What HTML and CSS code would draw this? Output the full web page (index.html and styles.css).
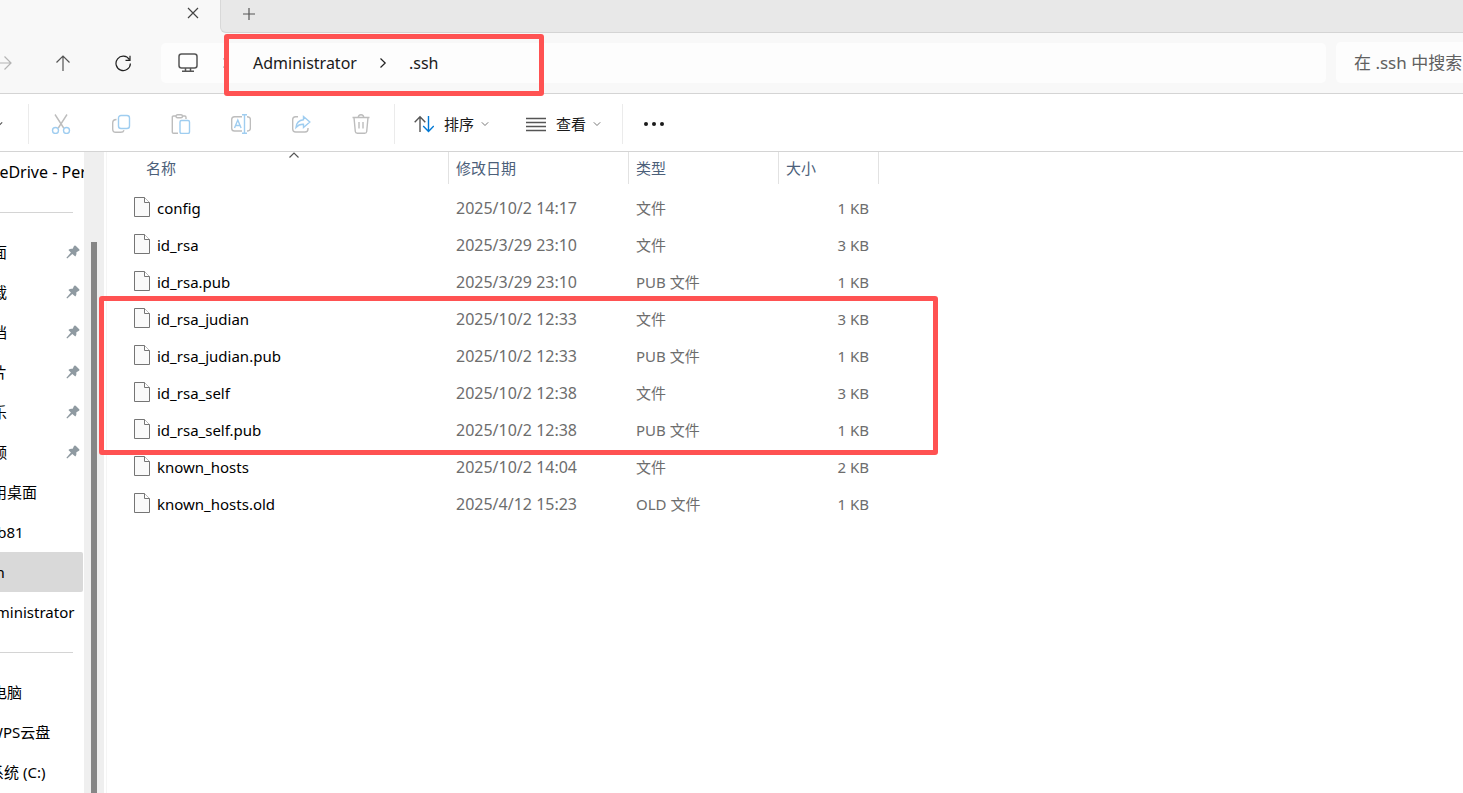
FILE: index.html
```html
<!DOCTYPE html>
<html lang="zh-CN">
<head>
  <meta charset="UTF-8" />
  <title>.ssh</title>
  <link rel="stylesheet" href="styles.css">
</head>
<body>
  <!-- shared icons -->
  <svg class="defs" width="0" height="0">
    <symbol id="file" viewBox="0 0 16 20">
      <path d="M.5.5h10l5 5v14H.5z" fill="#fafafa" stroke="#757575"/>
      <path d="M10.5.5v5h5" fill="#fff" stroke="#757575"/>
    </symbol>
    <symbol id="pin" viewBox="0 0 14 14">
      <path d="M8 .9Q8.800 0 9.700.8L13.200 4.200Q14 5.100 13 5.700L10.400 7.200Q10.800 9.900 9.300 11.400L6.300 9 1.200 13.600.4 12.800 4.900 7.600 2.400 5Q4 3.400 6.700 3.800z" fill="#8f9aa1"/>
    </symbol>
    <symbol id="down" viewBox="0 0 8 8">
      <path d="M.8 2.300 4 5.500 7.200 2.300" fill="none"/>
    </symbol>
  </svg>

  <div class="tabs">
    <div class="tab">
      <button aria-label="关闭"><svg width="12" height="12" viewBox="0 0 12 12"><path d="M1 1l10 10M11 1 1 11"/></svg></button>
    </div>
    <div class="tab-rest">
      <button aria-label="新建标签页"><svg width="12" height="12" viewBox="0 0 12 12"><path d="M6 0v12M0 6h12"/></svg></button>
    </div>
  </div>

  <div class="nav">
    <button class="dim" aria-label="前进"><svg width="18" height="18" viewBox="0 0 18 18"><path d="M1 9h16M10.500 2.500 17 9l-6.500 6.500"/></svg></button>
    <button aria-label="上移"><svg width="18" height="18" viewBox="0 0 18 18"><path d="M9 17V2M2.500 8.500 9 2l6.500 6.500"/></svg></button>
    <button class="dark" aria-label="刷新"><svg width="18" height="18" viewBox="0 0 18 18"><path d="M15.300 5.500A7.200 7.200 0 1 0 16.400 9.500M16 1.800v4.500h-4.500"/></svg></button>
    <div class="address">
      <svg class="pc" width="20" height="20" viewBox="0 0 20 20"><rect x="1" y="1" width="18" height="14" rx="2.500"/><path d="M7.500 15v3M12.500 15v3M4 18.300h12"/></svg>
      <svg class="crumb first" width="8" height="12" viewBox="0 0 8 12"><path d="M1.500 1.500 6.200 6l-4.700 4.500"/></svg>
      <a href="#">Administrator</a>
      <svg class="crumb" width="8" height="12" viewBox="0 0 8 12"><path d="M1.500 1.500 6.200 6l-4.700 4.500"/></svg>
      <a href="#">.ssh</a>
    </div>
    <input class="search" type="text" placeholder="在 .ssh 中搜索" aria-label="搜索">
    <div class="mark mark-path"></div>
  </div>

  <div class="toolbar">
    <button class="new" aria-label="新建"><svg width="8" height="8"><use href="#down"/></svg></button>
    <span class="sep"></span>
    <button class="icon" aria-label="剪切"><svg width="20" height="20" viewBox="0 0 20 20"><path d="M4 .5 12.700 14M16 .5 7.300 14"/><g class="blue"><circle cx="4.500" cy="16.500" r="3"/><circle cx="15.500" cy="16.500" r="3"/></g></svg></button>
    <button class="icon" aria-label="复制"><svg width="20" height="20" viewBox="0 0 20 20"><path d="M5.500 5.500Q1.700 5.500 1.700 9v6q0 3.300 3 3.300h5q2.700 0 3.300-2"/><rect class="blue" x="7.500" y="1.500" width="11" height="13" rx="2.500"/></svg></button>
    <button class="icon" aria-label="粘贴"><svg width="20" height="20" viewBox="0 0 20 20"><path d="M5 2H2.500Q1.300 2 1.300 3.200v15q0 1.100 1.200 1.100H7M11.500 2h2.300q1.200 0 1.200 1.200V5"/><rect x="5" y=".7" width="6.500" height="3" rx="1.500"/><rect class="blue" x="9" y="6.500" width="9.500" height="13" rx="1.500"/></svg></button>
    <button class="icon" aria-label="重命名"><svg width="20" height="20" viewBox="0 0 20 20"><path d="M11 2.700H3.500Q.7 2.700.7 5.500v8.700q0 2.800 2.800 2.800H11M16 2.700q3.400 0 3.400 3v8.300q0 3-3.400 3"/><path class="blue" d="M13.500.7v18.600M11 .7h5M11 19.300h5M3.500 14 6.800 6l3.300 8M4.600 11.500H9"/></svg></button>
    <button class="icon" aria-label="共享"><svg width="20" height="20" viewBox="0 0 20 20"><path d="M7 2.700H4.500Q1.700 2.700 1.700 5.500V15q0 3 3 3H14q3 0 3-3v-1"/><path class="blue" d="M12.500 2.500 18.800 8l-6.300 5.500v-3.200Q8 10 5 13.500 5.500 6.500 12.500 5.700z"/></svg></button>
    <button class="icon" aria-label="删除"><svg width="20" height="20" viewBox="0 0 20 20"><path d="M1.500 3.500h17M7.300 3.500Q7.300.7 10 .7t2.700 2.800M3 3.500l1.300 14q.2 1.800 2 1.800h7.400q1.800 0 2-1.800L17 3.500M8 8v6.500M12 8v6.500"/></svg></button>
    <span class="sep"></span>
    <button class="menu"><svg width="20" height="20" viewBox="0 0 20 20"><path d="M6 18V3M.7 8.200 6 2.700l5.300 5.500"/><path class="accent" d="M14.500 2v15M9.200 12l5.300 5.500 5.300-5.500"/></svg><span>排序</span><svg class="chev" width="8" height="8"><use href="#down"/></svg></button>
    <button class="menu"><svg width="20" height="20" viewBox="0 0 20 20"><path d="M0 4.500h20M0 8.500h20M0 12.500h20M0 16.500h20"/></svg><span>查看</span><svg class="chev" width="8" height="8"><use href="#down"/></svg></button>
    <span class="sep"></span>
    <button class="more" aria-label="更多"><svg width="22" height="6" viewBox="0 0 22 6"><circle cx="3" cy="3" r="2"/><circle cx="11" cy="3" r="2"/><circle cx="19" cy="3" r="2"/></svg></button>
  </div>

  <div class="content">
    <div class="sidebar">
      <ul>
        <li class="cloud"><a href="#">OneDrive - Per</a></li>
        <li class="line"></li>
        <li><a href="#">桌面</a><svg width="14" height="14"><use href="#pin"/></svg></li>
        <li><a href="#">下载</a><svg width="14" height="14"><use href="#pin"/></svg></li>
        <li><a href="#">文档</a><svg width="14" height="14"><use href="#pin"/></svg></li>
        <li><a href="#">图片</a><svg width="14" height="14"><use href="#pin"/></svg></li>
        <li><a href="#">音乐</a><svg width="14" height="14"><use href="#pin"/></svg></li>
        <li><a href="#">视频</a><svg width="14" height="14"><use href="#pin"/></svg></li>
        <li><a href="#">应用桌面</a></li>
        <li><a href="#">web81</a></li>
        <li class="active"><a href="#">.ssh</a></li>
        <li><a href="#">Administrator</a></li>
        <li class="line"></li>
        <li><a href="#">此电脑</a></li>
        <li class="sub"><a href="#">WPS云盘</a></li>
        <li class="sub"><a href="#">系统 (C:)</a></li>
      </ul>
    </div>
    <div class="scrollbar"><div class="thumb"></div></div>

    <div class="files">
      <table>
        <colgroup><col class="c-name"><col class="c-date"><col class="c-type"><col class="c-size"></colgroup>
        <thead>
          <tr>
            <th class="name"><div>名称<svg class="sort" width="10" height="6" viewBox="0 0 10 6"><path d="M.5 5.500 5 1l4.500 4.500"/></svg></div></th>
            <th>修改日期</th>
            <th>类型</th>
            <th>大小</th>
          </tr>
        </thead>
        <tbody>
          <tr><td class="name"><svg width="16" height="20"><use href="#file"/></svg>config</td><td class="date">2025/10/2 14:17</td><td>文件</td><td class="size">1 KB</td></tr>
          <tr><td class="name"><svg width="16" height="20"><use href="#file"/></svg>id_rsa</td><td class="date">2025/3/29 23:10</td><td>文件</td><td class="size">3 KB</td></tr>
          <tr><td class="name"><svg width="16" height="20"><use href="#file"/></svg>id_rsa.pub</td><td class="date">2025/3/29 23:10</td><td>PUB 文件</td><td class="size">1 KB</td></tr>
          <tr><td class="name"><svg width="16" height="20"><use href="#file"/></svg>id_rsa_judian</td><td class="date">2025/10/2 12:33</td><td>文件</td><td class="size">3 KB</td></tr>
          <tr><td class="name"><svg width="16" height="20"><use href="#file"/></svg>id_rsa_judian.pub</td><td class="date">2025/10/2 12:33</td><td>PUB 文件</td><td class="size">1 KB</td></tr>
          <tr><td class="name"><svg width="16" height="20"><use href="#file"/></svg>id_rsa_self</td><td class="date">2025/10/2 12:38</td><td>文件</td><td class="size">3 KB</td></tr>
          <tr><td class="name"><svg width="16" height="20"><use href="#file"/></svg>id_rsa_self.pub</td><td class="date">2025/10/2 12:38</td><td>PUB 文件</td><td class="size">1 KB</td></tr>
          <tr><td class="name"><svg width="16" height="20"><use href="#file"/></svg>known_hosts</td><td class="date">2025/10/2 14:04</td><td>文件</td><td class="size">2 KB</td></tr>
          <tr><td class="name"><svg width="16" height="20"><use href="#file"/></svg>known_hosts.old</td><td class="date">2025/4/12 15:23</td><td>OLD 文件</td><td class="size">1 KB</td></tr>
        </tbody>
      </table>
    </div>
    <div class="mark mark-keys"></div>
  </div>
</body>
</html>
```

FILE: styles.css
```css
* {
  box-sizing: border-box;
}
body {
  margin: 0;
  height: 100vh;
  display: flex;
  flex-direction: column;
  overflow: hidden;
  background: #fff;
  color: #000;
  font-family: "Noto Sans", "Noto Sans CJK SC", sans-serif;
  font-size: 15px;
  line-height: 20px;
}
button {
  display: flex;
  align-items: center;
  justify-content: center;
  flex: none;
  margin: 0;
  padding: 0;
  border: none;
  background: none;
  font: inherit;
  color: #1a1a1a;
}
a {
  color: inherit;
  text-decoration: none;
}
svg {
  flex: none;
  fill: none;
  stroke: #555;
  stroke-width: 1.2;
}
.defs {
  position: absolute;
}

/* tabs */
.tabs {
  display: flex;
  flex: none;
  height: 33px;
  background: #f8f8f8;
}
.tab {
  display: flex;
  justify-content: flex-end;
  width: 220px;
  padding-right: 15px;
}
.tab button {
  width: 24px;
  height: 26px;
}
.tab-rest button {
  width: 24px;
  height: 28px;
}
.tab svg {
  stroke: #444;
}
.tab-rest {
  flex: 1;
  padding-left: 16px;
  background: #e8e8e8;
  border-left: 1px solid #d8d8d8;
  border-bottom: 1px solid #d4d4d4;
  border-bottom-left-radius: 6px;
}

/* address row */
.nav {
  position: relative;
  display: flex;
  align-items: center;
  flex: none;
  height: 61px;
  padding-bottom: 1px;
  background: #f8f8f8;
  border-bottom: 1px solid #d4d4d4;
}
.nav button {
  width: 60px;
  height: 40px;
}
.nav button:first-child {
  margin-left: -27px;
}
.nav .dim svg {
  stroke: #b4b4b4;
}
.nav .dark svg {
  stroke: #222;
}
.address {
  display: flex;
  align-items: center;
  flex: 1;
  height: 40px;
  margin: 0 10px 0 8px;
  padding-left: 17px;
  border-radius: 5px;
  background: #fdfdfd;
  font-size: 16px;
  color: #1a1a1a;
}
.address .pc {
  stroke-width: 1.5;
}
.address .crumb {
  margin: 0 22px;
  stroke: #222;
}
.address .first {
  margin: 0 23px 0 24px;
  stroke: #999;
}
.search {
  width: 127px;
  height: 41px;
  padding: 0 0 0 18px;
  border: none;
  border-radius: 5px 0 0 5px;
  background: #fdfdfd;
  font: inherit;
  font-size: 17px;
}
.search::placeholder {
  color: #606060;
  opacity: 1;
}

/* commands */
.toolbar {
  display: flex;
  align-items: center;
  flex: none;
  height: 58px;
  padding-bottom: 1px;
  padding-top: 4px;
  border-bottom: 1px solid #d4d4d4;
}
.toolbar button {
  height: 40px;
}
.toolbar .new {
  width: 52px;
  margin-left: -27px;
}
.toolbar .icon {
  width: 60px;
}
.icon svg {
  stroke: #bdbdbd;
  stroke-width: 1.4;
}
.icon .blue {
  stroke: #9fcdf0;
}
.sep {
  width: 1px;
  height: 40px;
  margin: 0 2px 0 3px;
  background: #ebebeb;
}
.toolbar .menu {
  padding: 0 18px 0 17px;
}
.menu + .menu {
  margin-left: 2px;
}
.menu span {
  margin: 0 7px 0 10px;
}
.menu svg {
  stroke-width: 1.4;
}
.menu .chev {
  stroke: #777;
  stroke-width: 1;
}
.menu .accent {
  stroke: #0078d4;
}
.toolbar .more {
  width: 58px;
}
.more svg {
  fill: #1a1a1a;
  stroke: none;
}

/* main area */
.content {
  position: relative;
  display: flex;
  flex: 1;
  min-height: 0;
}
.sidebar {
  width: 84px;
  overflow: hidden;
}
.sidebar ul {
  margin: 0 1px 0 -23px;
  padding: 0;
  list-style: none;
}
.sidebar li {
  display: flex;
  align-items: center;
  justify-content: space-between;
  height: 40px;
  padding-right: 3px;
  white-space: nowrap;
}
.sidebar .sub {
  padding-left: 12px;
}
.sidebar .cloud {
  font-size: 16px;
}
.sidebar .active {
  background: #d9d9d9;
  border-radius: 2px;
}
.sidebar .line::before {
  content: "";
  flex: 1;
  height: 1px;
  margin-right: 7px;
  background: #d4d4d4;
}
.sidebar svg {
  stroke: none;
}
.scrollbar {
  width: 20px;
  padding: 90px 7px 0;
  background: #efefef;
}
.thumb {
  height: 100%;
  background: #868686;
}
.files {
  flex: 1;
  margin-left: 2px;
  border-left: 1px solid #f5f5f5;
}
table {
  width: 772px;
  table-layout: fixed;
  border-spacing: 0;
}
.c-name {
  width: 342px;
}
.c-date {
  width: 180px;
}
.c-type {
  width: 150px;
}
.c-size {
  width: 100px;
}
th {
  height: 32px;
  padding: 0 0 0 7px;
  border-right: 1px solid #e2e2e2;
  color: #4c607a;
  font-weight: normal;
  text-align: left;
}
th.name {
  padding-left: 32px;
}
th.name div {
  position: relative;
  padding-left: 7px;
}
.sort {
  position: absolute;
  top: -6px;
  left: 50%;
  margin-left: -5px;
}
tbody::before {
  content: "";
  display: block;
  height: 5px;
}
td {
  height: 37px;
  padding: 0 0 0 7px;
  color: #6d6d6d;
}
td.name {
  padding-left: 27px;
  color: #000;
}
td svg {
  margin-right: 7px;
  vertical-align: -3px;
  stroke-width: 1;
}
td.date {
  font-size: 16px;
}
td.size {
  padding-right: 10px;
  text-align: right;
}

/* red highlight frames */
.mark {
  position: absolute;
  border: 5px solid #ff5252;
  border-radius: 3px;
  pointer-events: none;
}
.mark-path {
  top: 1px;
  left: 224px;
  width: 320px;
  height: 62px;
}
.mark-keys {
  top: 144px;
  left: 99px;
  width: 839px;
  height: 159px;
}
```
